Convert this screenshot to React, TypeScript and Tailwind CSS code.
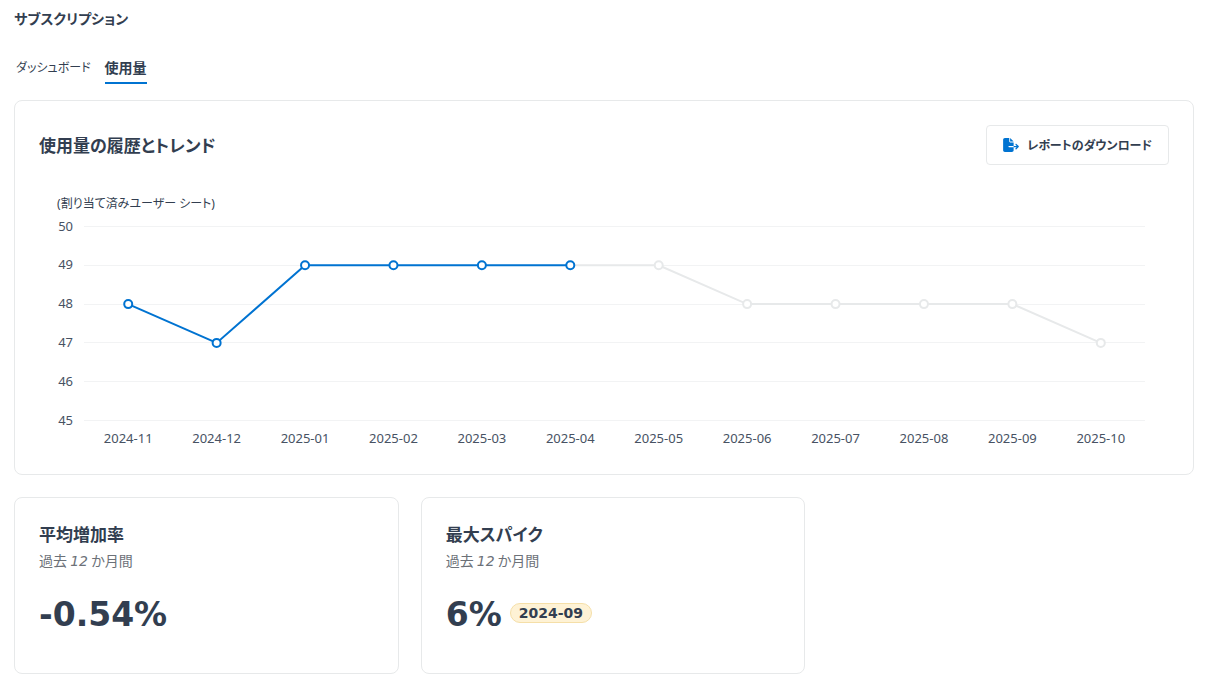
import { FaFileExport } from "react-icons/fa6";

type UsagePoint = {
  month: string;
  seats: number;
};

type StatCardProps = {
  title: string;
  value: string;
  badge?: string;
};

const usage: UsagePoint[] = [
  { month: "2024-11", seats: 48 },
  { month: "2024-12", seats: 47 },
  { month: "2025-01", seats: 49 },
  { month: "2025-02", seats: 49 },
  { month: "2025-03", seats: 49 },
  { month: "2025-04", seats: 49 },
  { month: "2025-05", seats: 49 },
  { month: "2025-06", seats: 48 },
  { month: "2025-07", seats: 48 },
  { month: "2025-08", seats: 48 },
  { month: "2025-09", seats: 48 },
  { month: "2025-10", seats: 47 },
];

// 実績の件数。以降は予測値としてグレーで描く
const actualCount = 6;
const ticks = [50, 49, 48, 47, 46, 45];

function UsageChart() {
  const left = 45;
  const right = 1106;
  const top = 37;
  const bottom = 231;
  const step = (right - left) / usage.length;
  const xForIndex = (index: number) => left + step * (index + 0.5);
  const yForSeats = (seats: number) => top + ((50 - seats) * (bottom - top)) / 5;
  const toPoints = (start: number, end: number) =>
    usage
      .slice(start, end)
      .map((point, i) => `${xForIndex(start + i)},${yForSeats(point.seats) + 0.5}`)
      .join(" ");

  return (
    <svg
      className="mt-6 block h-auto w-full font-['Noto_Sans','Noto_Sans_CJK_JP',sans-serif] text-[13px]"
      viewBox="0 0 1130 261"
      role="img"
      aria-label="使用量の履歴とトレンド"
    >
      <text x={97} y={19} textAnchor="middle" fill="#323e50" className="text-[12px]">
        (割り当て済みユーザー シート)
      </text>
      {ticks.map((tick) => (
        <g key={tick}>
          <line
            x1={left}
            x2={right}
            y1={Math.round(yForSeats(tick)) + 0.5}
            y2={Math.round(yForSeats(tick)) + 0.5}
            stroke="#f2f3f4"
          />
          <text x={34} y={Math.floor(yForSeats(tick)) + 5} textAnchor="end" fill="#475263">
            {tick}
          </text>
        </g>
      ))}
      <polyline
        points={toPoints(actualCount - 1, usage.length)}
        fill="none"
        stroke="#e7e9ea"
        strokeWidth={2}
      />
      <polyline
        points={toPoints(0, actualCount)}
        fill="none"
        stroke="#0073d1"
        strokeWidth={2}
      />
      {usage.map((point, index) => (
        <g key={point.month}>
          <circle
            cx={xForIndex(index)}
            cy={yForSeats(point.seats) + 0.5}
            r={4}
            fill="#fff"
            stroke={index < actualCount ? "#0073d1" : "#e7e9ea"}
            strokeWidth={2}
          />
          <text x={xForIndex(index)} y={254} textAnchor="middle" fill="#475263">
            {point.month}
          </text>
        </g>
      ))}
    </svg>
  );
}

function StatCard({ title, value, badge }: StatCardProps) {
  return (
    <section className="h-[177px] w-[32.6%] rounded-lg border border-[#e7e9ea] p-6">
      <h2 className="text-[17px] leading-6 font-bold">{title}</h2>
      <p className="mt-1 text-[14px] leading-5 text-[#6c7178]">
        過去 <em className="font-['DejaVu_Sans',sans-serif]">12</em> か月間
      </p>
      <div className="mt-6 flex items-center gap-2 font-['DejaVu_Sans',sans-serif] font-bold">
        <span className="text-[33px] leading-10">{value}</span>
        {badge && (
          <span className="mb-1 rounded-full border border-[#f5dfa8] bg-[#fef2d5] px-2 text-[14px] leading-[18px]">
            {badge}
          </span>
        )}
      </div>
    </section>
  );
}

export default function App() {
  return (
    <main className="bg-white pt-1.5 pr-4 pb-1 pl-[14px] font-['Noto_Sans_CJK_JP',sans-serif] text-[#323e50] [font-feature-settings:'palt']">
      <h1 className="text-[14px] leading-6 font-bold">サブスクリプション</h1>

      <nav className="mt-[26px] flex gap-[14px] leading-[22px]">
        <a href="#dashboard" className="ml-0.5 text-[12px]">
          ダッシュボード
        </a>
        <a
          href="#usage"
          aria-current="page"
          className="border-b-2 border-[#0073d1] pb-1 text-[14px] font-bold"
        >
          使用量
        </a>
      </nav>

      <section className="mt-4 rounded-lg border border-[#e7e9ea] p-6">
        <div className="flex items-center justify-between">
          <h2 className="text-[17px] leading-6 font-bold">使用量の履歴とトレンド</h2>
          <button
            type="button"
            className="flex h-10 items-center gap-2 rounded border border-[#e7e9ea] bg-white px-4 text-[12px] font-bold"
          >
            <FaFileExport className="h-[14px] w-4 text-[#0073d1]" aria-hidden />
            レポートのダウンロード
          </button>
        </div>
        <UsageChart />
      </section>

      <div className="mt-[22px] flex gap-[22px]">
        <StatCard title="平均増加率" value="-0.54%" />
        <StatCard title="最大スパイク" value="6%" badge="2024-09" />
      </div>
    </main>
  );
}
